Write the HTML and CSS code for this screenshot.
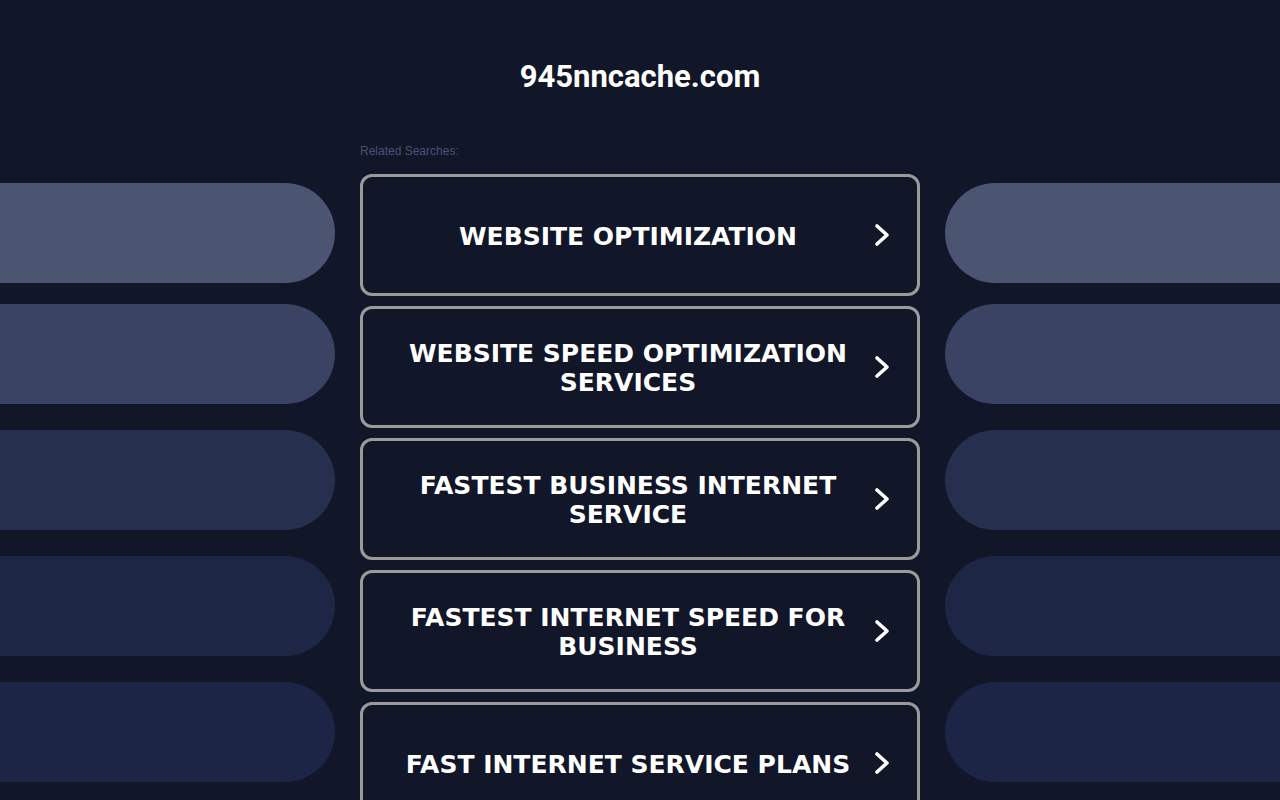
FILE: index.html
```html
<!DOCTYPE html>
<html>
<head>
<meta charset="utf-8">
<link rel="stylesheet" href="styles.css">
</head>
<body>
<div class="page">
  <div class="side side-left">
    <div class="pill p1"></div>
    <div class="pill p2"></div>
    <div class="pill p3"></div>
    <div class="pill p4"></div>
    <div class="pill p5"></div>
  </div>
  <div class="center">
    <h1 class="title">945nncache.com</h1>
    <div class="related">Related Searches:</div>
    <div class="links">
      <a class="link" href="#"><span class="label">WEBSITE OPTIMIZATION</span><svg class="chev" viewBox="0 0 17 24"><polyline points="3,3 13,12 3,21"/></svg></a>
      <a class="link" href="#"><span class="label">WEBSITE SPEED OPTIMIZATION SERVICES</span><svg class="chev" viewBox="0 0 17 24"><polyline points="3,3 13,12 3,21"/></svg></a>
      <a class="link" href="#"><span class="label">FASTEST BUSINESS INTERNET SERVICE</span><svg class="chev" viewBox="0 0 17 24"><polyline points="3,3 13,12 3,21"/></svg></a>
      <a class="link" href="#"><span class="label">FASTEST INTERNET SPEED FOR BUSINESS</span><svg class="chev" viewBox="0 0 17 24"><polyline points="3,3 13,12 3,21"/></svg></a>
      <a class="link" href="#"><span class="label">FAST INTERNET SERVICE PLANS</span><svg class="chev" viewBox="0 0 17 24"><polyline points="3,3 13,12 3,21"/></svg></a>
    </div>
  </div>
  <div class="side side-right">
    <div class="pill p1"></div>
    <div class="pill p2"></div>
    <div class="pill p3"></div>
    <div class="pill p4"></div>
    <div class="pill p5"></div>
  </div>
</div>
</body>
</html>
```
FILE: styles.css
```css
html, body {
  margin: 0;
  padding: 0;
  background: #111629;
  height: 100%;
  overflow: hidden;
}
.page {
  display: grid;
  grid-template-columns: 335px 560px 335px;
  column-gap: 25px;
  width: 1280px;
  height: 800px;
}
.side {
  display: flex;
  flex-direction: column;
  padding-top: 183px;
}
.pill {
  height: 100px;
  flex: none;
  margin-top: 26px;
}
.pill.p1 { margin-top: 0; }
.pill.p2 { margin-top: 21px; }
.side-left .pill { border-radius: 0 50px 50px 0; }
.side-right .pill { border-radius: 50px 0 0 50px; }
.p1 { background: #4b5572; }
.p2 { background: #3a4363; }
.p3 { background: #272f4e; }
.p4 { background: #1e2646; }
.p5 { background: #1c2545; }

.center {
  display: flex;
  flex-direction: column;
}
.title {
  margin: 59px 0 0;
  font-family: Roboto, "Liberation Sans", Arial, sans-serif;
  font-weight: 700;
  font-size: 31px;
  line-height: 36px;
  color: #ffffff;
  text-align: center;
}
.related {
  margin-top: 49px;
  font-family: "Liberation Sans", Arial, sans-serif;
  font-size: 12px;
  line-height: 14px;
  color: #4a5372;
}
.links {
  margin-top: 16px;
  display: flex;
  flex-direction: column;
  gap: 10px;
}
.link {
  box-sizing: border-box;
  height: 122px;
  border: 3px solid #9b9b9b;
  border-radius: 12px;
  display: flex;
  align-items: center;
  padding: 0 26px 0 39px;
  gap: 20px;
  text-decoration: none;
  flex: none;
}
.label {
  flex: 1;
  text-align: center;
  padding-top: 2px;
  font-family: "DejaVu Sans", Verdana, sans-serif;
  font-weight: 700;
  font-size: 25px;
  line-height: 29px;
  color: #ffffff;
}
.chev {
  width: 17px;
  height: 24px;
  flex: none;
}
.chev polyline {
  fill: none;
  stroke: #ffffff;
  stroke-width: 3.6;
  stroke-linecap: round;
  stroke-linejoin: round;
}
```
